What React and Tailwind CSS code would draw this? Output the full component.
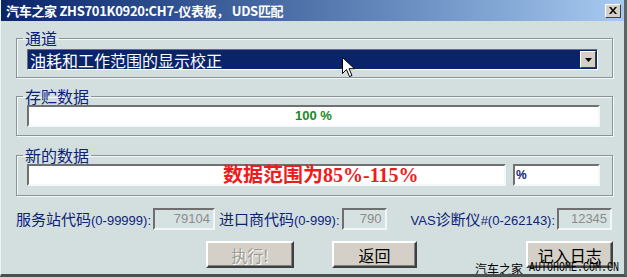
import React from 'react';

const cjk = "font-['Noto_Sans_CJK_SC','Liberation_Sans',sans-serif]";
const arial = "font-['Liberation_Sans','Noto_Sans_CJK_SC',sans-serif]";

function Group({ title, className = '', children }) {
    return (
        <fieldset className={`border border-[#8a9494] shadow-[inset_1px_1px_0_#f4f8f8,1px_1px_0_#f4f8f8] px-[10px] ${className}`}>
            <legend className={`ml-[-4px] px-[2px] text-[16px] leading-[16px] text-[#0c2377] ${cjk}`}>{title}</legend>
            {children}
        </fieldset>
    );
}

function CodeField({ label, range, value, width, className = '' }) {
    return (
        <>
            <span className={`flex items-baseline text-[#0c2377] whitespace-nowrap ${className}`}>
                <span className={`text-[15px] ${cjk}`}>{label}</span>
                <span className={`text-[13px] ${arial}`}>{range}</span>
            </span>
            <div className={`ml-[2px] h-[22px] ${width} border-2 border-t-[#6f6f6f] border-l-[#6f6f6f] border-b-[#f2f6f6] border-r-[#f2f6f6] bg-[#d6e1e1] flex items-center justify-end pr-[3px] text-[13px] text-[#8c8c8c] ${arial}`}>
                {value}
            </div>
        </>
    );
}

function Button({ label, disabled, className = '' }) {
    return (
        <button className={`h-[27px] bg-[#d4d0c8] border-2 border-t-white border-l-white border-b-[#404040] border-r-[#404040] shadow-[inset_-1px_-1px_0_#808080] flex items-center justify-center text-[16px] ${cjk} ${disabled ? 'text-[#9c9a94] [text-shadow:1px_1px_0_#fff]' : 'text-black'} ${className}`}>
            {label}
        </button>
    );
}

export default function App() {
    return (
        <div className="relative w-[627px] h-[277px] overflow-hidden bg-[#d3dfdf] border-r-[3px] border-r-[#5e6464] border-b-[3px] border-b-[#4a4f4f] border-l border-l-[#eef4f4] flex flex-col">
            {/* Title bar */}
            <div className="h-[21px] shrink-0 bg-gradient-to-r from-[#0a246a] to-[#a6caf0] flex items-center justify-between pl-[5px] pr-[3px]">
                <span className={`text-[13px] font-bold text-white whitespace-nowrap tracking-[-0.3px] ${cjk}`}>
                    汽车之家 ZHS701K0920:CH7-仪表板，  UDS匹配
                </span>
                <div className="w-[16px] h-[14px] bg-[#d4d0c8] border border-t-white border-l-white border-b-[#404040] border-r-[#404040] flex items-center justify-center">
                    <svg width="8" height="7" viewBox="0 0 8 7">
                        <path d="M0 0h2l2 2.5L6 0h2L5 3.5 8 7H6L4 4.5 2 7H0l3-3.5z" fill="#000" />
                    </svg>
                </div>
            </div>

            <div className="flex flex-col pl-[15px] pr-[11px]">
                <Group title="通道" className="mt-[9px] pt-[3px] pb-[7px]">
                    <div className="h-[21px] mr-[4px] border border-t-[#6f6f6f] border-l-[#6f6f6f] border-b-white border-r-white bg-[#0a246a] flex items-center">
                        <span className={`flex-1 pl-[2px] text-[16px] leading-[16px] text-white whitespace-nowrap ${cjk}`}>油耗和工作范围的显示校正</span>
                        <div className="w-[16px] h-[17px] mr-[1px] bg-[#d4d0c8] border border-t-white border-l-white border-b-[#404040] border-r-[#404040] flex items-center justify-center">
                            <svg width="7" height="4" viewBox="0 0 7 4"><path d="M0 0h7L3.5 4z" fill="#000" /></svg>
                        </div>
                    </div>
                </Group>

                <Group title="存贮数据" className="mt-[10px] pt-[1px] pb-[8px]">
                    <div className="h-[22px] mr-[2px] border-2 border-t-[#707070] border-l-[#707070] border-b-[#f4f8f8] border-r-[#f4f8f8] bg-white flex items-center justify-center">
                        <span className={`text-[13px] font-bold text-[#17891e] ${arial}`}>100 %</span>
                    </div>
                </Group>

                <Group title="新的数据" className="mt-[11px] pt-[1px] pb-[9px]">
                    <div className="flex mr-[2px]">
                        <div className="w-[479px] h-[22px] border-2 border-t-[#707070] border-l-[#707070] border-b-[#f4f8f8] border-r-[#f4f8f8] bg-white flex items-center pl-[194px]">
                            <span className="text-[20px] leading-[20px] font-bold text-[#ee1c1c] whitespace-nowrap font-['Liberation_Serif','Noto_Sans_CJK_SC',serif]">
                                数据范围为85%-115%
                            </span>
                        </div>
                        <div className="ml-[7px] flex-1 h-[22px] border-2 border-t-[#707070] border-l-[#707070] border-b-[#f4f8f8] border-r-[#f4f8f8] bg-white flex items-center pl-[1px]">
                            <span className={`text-[12px] font-bold text-[#0c2377] ${arial}`}>%</span>
                        </div>
                    </div>
                </Group>

                {/* Codes row */}
                <div className="mt-[12px] h-[22px] flex items-center">
                    <CodeField label="服务站代码" range="(0-99999):" value="79104" width="w-[62px]" />
                    <CodeField label="进口商代码" range="(0-999):" value="790" width="w-[45px]" className="ml-[4px]" />
                    <span className={`ml-[24px] flex items-baseline text-[#0c2377] whitespace-nowrap`}>
                        <span className={`text-[13px] ${arial}`}>VAS</span>
                        <span className={`text-[15px] ${cjk}`}>诊断仪</span>
                        <span className={`text-[13px] ${arial}`}>#(0-262143):</span>
                    </span>
                    <div className={`ml-[2px] h-[22px] w-[55px] border-2 border-t-[#6f6f6f] border-l-[#6f6f6f] border-b-[#f2f6f6] border-r-[#f2f6f6] bg-[#d6e1e1] flex items-center justify-end pr-[3px] text-[13px] text-[#8c8c8c] ${arial}`}>
                        12345
                    </div>
                </div>

                {/* Buttons */}
                <div className="mt-[11px] flex">
                    <Button label="执行!" disabled className="ml-[190px] w-[88px]" />
                    <Button label="返回" className="ml-[38px] w-[86px]" />
                    <Button label="记入日志" className="ml-[109px] w-[87px]" />
                </div>
            </div>

            {/* Watermark */}
            <div className="absolute left-[474px] top-[262px] flex items-end gap-[6px] text-black whitespace-nowrap">
                <span className={`text-[12px] leading-[13px] ${cjk}`}>汽车之家</span>
                <span className="text-[10px] leading-[11px] font-['Liberation_Mono',monospace] scale-y-[1.3] origin-bottom">AUTOHOME.COM.CN</span>
            </div>

            {/* Mouse cursor */}
            <svg className="absolute left-[341px] top-[57px]" width="13" height="21" viewBox="0 0 13 21">
                <path d="M0.5 0.5v16l4-4 3 7 2.5-1-3-6.8h5.5z" fill="#fff" stroke="#000" strokeWidth="1" />
            </svg>
        </div>
    );
}
